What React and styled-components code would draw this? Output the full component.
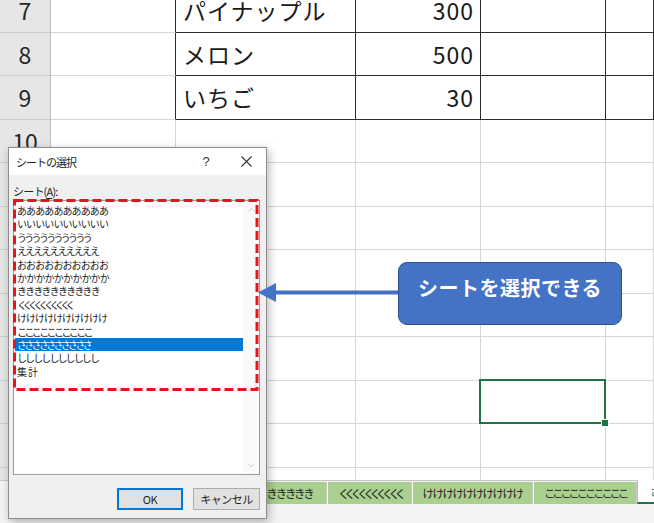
import React from "react";
import styled, { createGlobalStyle } from "styled-components";
import { ChevronUp, ChevronDown } from "lucide-react";

const GlobalStyle = createGlobalStyle`
  html, body { margin: 0; padding: 0; }
  body {
    font-family: "Noto Sans CJK JP", "Noto Sans", sans-serif;
    background: #fff;
    overflow: hidden;
  }
`;

const JP = `"Noto Sans CJK JP", "Noto Sans", sans-serif`;
const LIGHT = "#d6d6d6";
const DARK = "#2b2b2b";
const LIST_FONT = 10;
const TAB_FONT = 11.5;

const rows = [
  { n: 7, name: "パイナップル", price: "300", table: true },
  { n: 8, name: "メロン", price: "500", table: true },
  { n: 9, name: "いちご", price: "30", table: true },
  { n: 10 },
  { n: 11 },
  { n: 12 },
  { n: 13 },
  { n: 14 },
  { n: 15 },
  { n: 16, selected: true },
  { n: 17 },
  { n: 18 },
];

// name + width the name takes in the list (kana are proportional in the original UI font)
const sheets = [
  ["ああああああああああ", 91],
  ["いいいいいいいいいい", 91],
  ["うううううううううう", 73],
  ["ええええええええええ", 81],
  ["おおおおおおおおおお", 91],
  ["かかかかかかかかかか", 92],
  ["きききききききききき", 82],
  ["くくくくくくくくくく", 54],
  ["けけけけけけけけけけ", 90],
  ["ここここここここここ", 74],
  ["ささささささささささ", 73],
  ["しししししししししし", 81],
  ["集計", 22],
];

const tabs = [
  { name: "きききききききききき", width: 121, text: 92 },
  { name: "くくくくくくくくくく", width: 85, text: 63 },
  { name: "けけけけけけけけけけ", width: 121, text: 100 },
  { name: "ここここここここここ", width: 104, text: 82 },
];

const track = (text, width, size) => width / [...text].length - size;

const App = () => {
  return (
    <Page>
      <GlobalStyle />
      <SheetArea>
        <Grid>
          {rows.map((r) => (
            <React.Fragment key={r.n}>
              <RowHead>{r.n}</RowHead>
              <Cell $right={r.table ? DARK : LIGHT} />
              <Cell $right={r.table ? DARK : LIGHT} $bottom={r.table ? DARK : LIGHT}>
                {r.name && <CellText>{r.name}</CellText>}
              </Cell>
              <Cell $right={r.table ? DARK : LIGHT} $bottom={r.table ? DARK : LIGHT} $align="flex-end">
                {r.price && <CellText>{r.price}</CellText>}
              </Cell>
              <Cell $right={r.table ? DARK : LIGHT} $bottom={r.table ? DARK : LIGHT} $selected={r.selected} />
              <Cell $right={r.table ? DARK : LIGHT} $bottom={r.table ? DARK : LIGHT} />
            </React.Fragment>
          ))}
        </Grid>
      </SheetArea>

      <TabBar>
        <TabNav />
        {tabs.map((t) => (
          <Tab key={t.name} $width={t.width} $track={track(t.name, t.text, TAB_FONT)}>
            {t.name}
          </Tab>
        ))}
        <ActiveTab $track={track("ささ", 16.6, TAB_FONT)}>ささささささささささ</ActiveTab>
      </TabBar>

      <Dialog>
        <TitleBar>
          <TitleText>シートの選択</TitleText>
          <TitleButton>?</TitleButton>
          <TitleButton>
            <svg width="11" height="11" viewBox="0 0 11 11">
              <path d="M0.5 0.5 L10.5 10.5 M10.5 0.5 L0.5 10.5" stroke="#333" strokeWidth="1.1" />
            </svg>
          </TitleButton>
        </TitleBar>
        <DialogBody>
          <Label>
            シート(<u>A</u>):
          </Label>
          <ListBox>
            <ListItems>
              {sheets.map(([s, w]) => (
                <ListItem key={s} $active={s.startsWith("さ")} $track={track(s, w, LIST_FONT)}>
                  {s}
                </ListItem>
              ))}
            </ListItems>
            <ScrollBar>
              <ChevronUp size={11} color="#c4c4c4" strokeWidth={2} />
              <ChevronDown size={11} color="#c4c4c4" strokeWidth={2} />
            </ScrollBar>
            <Marker width="250" height="196" viewBox="0 0 250 196">
              <rect
                x="2.5"
                y="1.5"
                width="242.5"
                height="189"
                fill="none"
                stroke="#e8141b"
                strokeWidth="3"
                strokeDasharray="9 4"
              />
            </Marker>
          </ListBox>
          <ButtonRow>
            <Button $focused>OK</Button>
            <Button>キャンセル</Button>
          </ButtonRow>
        </DialogBody>
      </Dialog>

      <Arrow width="145" height="22" viewBox="0 0 145 22">
        <line x1="16" y1="10.5" x2="145" y2="10.5" stroke="#4472c4" strokeWidth="4" />
        <polygon points="1,10.5 19,1 19,20" fill="#4472c4" />
      </Arrow>
      <Callout>シートを選択できる</Callout>
    </Page>
  );
};

export default App;

const Page = styled.div`
  position: relative;
  width: 654px;
  height: 523px;
  overflow: hidden;
  display: flex;
  flex-direction: column;
  background: #fff;
`;

const SheetArea = styled.div`
  height: 480px;
  flex: none;
  overflow: hidden;
`;

const Grid = styled.div`
  display: grid;
  grid-template-columns: 51px 125px 180px 125px 125px 1fr;
  grid-auto-rows: 43.5px;
  margin-top: -11px;
`;

const RowHead = styled.div`
  box-sizing: border-box;
  background: #e6e6e6;
  border-right: 1px solid #bdbdbd;
  border-bottom: 1px solid #cdcdcd;
  display: flex;
  align-items: center;
  justify-content: center;
  font-family: ${JP};
  font-size: 23px;
  color: #262626;
`;

const Cell = styled.div`
  position: relative;
  box-sizing: border-box;
  border-right: 1px solid ${({ $right }) => $right || LIGHT};
  border-bottom: 1px solid ${({ $bottom }) => $bottom || LIGHT};
  display: flex;
  align-items: center;
  justify-content: ${({ $align }) => $align || "flex-start"};
  padding: 0 6px 0 7px;
  ${({ $selected }) =>
    $selected &&
    `
    &::after {
      content: "";
      position: absolute;
      left: -2px;
      top: -2px;
      right: -1px;
      bottom: -1px;
      border: 2px solid #217346;
    }
    &::before {
      content: "";
      position: absolute;
      right: -4px;
      bottom: -4px;
      width: 6px;
      height: 6px;
      background: #217346;
      border: 1px solid #fff;
      z-index: 1;
    }
  `}
`;

const CellText = styled.span`
  font-family: ${JP};
  font-size: 23px;
  color: #1a1a1a;
  letter-spacing: 1px;
  white-space: nowrap;
`;

const TabBar = styled.div`
  flex: 1;
  display: flex;
  align-items: flex-start;
  background: #f3f3f3;
  border-top: 1px solid #c6c6c6;
  padding-top: 1px;
`;

const TabNav = styled.div`
  width: 206px;
  flex: none;
`;

const Tab = styled.div`
  flex: none;
  box-sizing: border-box;
  width: ${({ $width }) => $width}px;
  height: 22px;
  background: #a9d08e;
  border-right: 1px solid #c9c9c9;
  border-left: 1px solid #fff;
  display: flex;
  align-items: center;
  justify-content: center;
  font-family: ${JP};
  font-size: ${TAB_FONT}px;
  letter-spacing: ${({ $track }) => $track}px;
  color: #222;
  white-space: nowrap;
  overflow: hidden;
`;

const ActiveTab = styled.div`
  flex: none;
  margin-top: -2px;
  height: 22px;
  background: #fff;
  border-left: 1px solid #bdbdbd;
  border-bottom: 2px solid #217346;
  padding: 0 12px;
  display: flex;
  align-items: center;
  font-family: ${JP};
  font-size: ${TAB_FONT}px;
  letter-spacing: ${({ $track }) => $track}px;
  color: #217346;
  white-space: nowrap;
`;

const Dialog = styled.div`
  position: absolute;
  left: 8px;
  top: 147px;
  width: 259px;
  height: 372px;
  box-sizing: border-box;
  background: #f0f0f0;
  border: 1px solid #8d8d8d;
  box-shadow: 2px 3px 9px rgba(0, 0, 0, 0.28);
  display: flex;
  flex-direction: column;
  font-family: ${JP};
  z-index: 5;
`;

const TitleBar = styled.div`
  height: 27px;
  background: #fff;
  display: flex;
  align-items: center;
  padding-left: 7px;
  font-size: 11px;
  color: #222;
`;

const TitleText = styled.div`
  flex: 1;
  letter-spacing: -1px;
`;

const TitleButton = styled.div`
  width: 40px;
  height: 27px;
  display: flex;
  align-items: center;
  justify-content: center;
  font-family: "Liberation Sans", sans-serif;
  font-size: 13px;
  color: #333;
`;

const DialogBody = styled.div`
  flex: 1;
  display: flex;
  flex-direction: column;
  padding: 8px 6px 0 4px;
`;

const Label = styled.div`
  height: 17px;
  font-size: 11px;
  color: #222;
  letter-spacing: -0.8px;
  line-height: 17px;

  u {
    text-underline-offset: 2px;
  }
`;

const ListBox = styled.div`
  position: relative;
  height: 275px;
  box-sizing: border-box;
  background: #fff;
  border: 1px solid #9a9a9a;
  display: flex;
`;

const ListItems = styled.div`
  flex: 1;
  padding: 3px 0 0 1px;
`;

const ListItem = styled.div`
  height: 13.4px;
  line-height: 13.4px;
  padding-left: 2px;
  font-size: ${LIST_FONT}px;
  letter-spacing: ${({ $track }) => $track}px;
  color: ${({ $active }) => ($active ? "#fff" : "#1e1e1e")};
  background: ${({ $active }) => ($active ? "#0078d7" : "transparent")};
  white-space: nowrap;
  overflow: hidden;
`;

const ScrollBar = styled.div`
  width: 16px;
  flex: none;
  background: #fafafa;
  display: flex;
  flex-direction: column;
  justify-content: space-between;
  align-items: center;
  padding: 3px 0;
`;

const Marker = styled.svg`
  position: absolute;
  left: -2px;
  top: -2px;
  pointer-events: none;
`;

const ButtonRow = styled.div`
  display: flex;
  justify-content: flex-end;
  gap: 10px;
  margin-top: 13px;
`;

const Button = styled.div`
  box-sizing: border-box;
  width: ${({ $focused }) => ($focused ? 66 : 67)}px;
  height: 22px;
  background: #e1e1e1;
  border: ${({ $focused }) => ($focused ? "2px solid #0078d7" : "1px solid #adadad")};
  display: flex;
  align-items: center;
  justify-content: center;
  font-family: ${JP};
  font-size: 11px;
  letter-spacing: -0.5px;
  color: #1e1e1e;
`;

const Arrow = styled.svg`
  position: absolute;
  left: 257px;
  top: 282px;
  z-index: 6;
`;

const Callout = styled.div`
  position: absolute;
  left: 398px;
  top: 262px;
  width: 224px;
  height: 63px;
  box-sizing: border-box;
  background: #4472c4;
  border: 1px solid #2f528f;
  border-radius: 9px;
  padding-top: 11px;
  text-align: center;
  font-family: ${JP};
  font-size: 20px;
  font-weight: 700;
  letter-spacing: 0.5px;
  line-height: 27px;
  color: #fff;
  z-index: 6;
`;
